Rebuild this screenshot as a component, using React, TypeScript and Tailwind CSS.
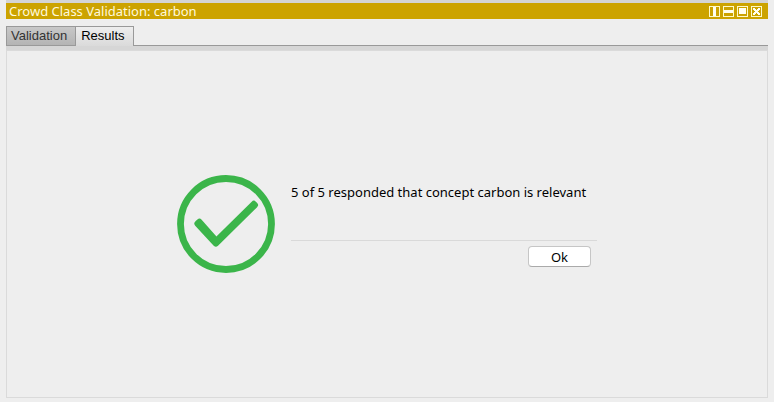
import { useState } from "react";
import type { ReactNode } from "react";

function FrameButton({ label, children }: { label: string; children: ReactNode }) {
  return (
    <button type="button" aria-label={label} className="block">
      <svg width="11" height="11" viewBox="0 0 11 11" shapeRendering="crispEdges" fill="#fffef0">
        <rect x="0.5" y="0.5" width="10" height="10" fill="none" stroke="#fffac8" />
        {children}
      </svg>
    </button>
  );
}

function TitleBar() {
  return (
    <header className="flex h-[19px] items-center justify-between border-t-[3px] border-[#d4d4d4] bg-[#cca300] pr-[6px] pl-[3px]">
      <h1 className="text-[13px] leading-4 text-[#fff9dc]">Crowd Class Validation: carbon</h1>
      <div className="flex gap-[3px]">
        <FrameButton label="Split vertically">
          <rect x="4" y="1" width="3" height="9" />
        </FrameButton>
        <FrameButton label="Split horizontally">
          <rect x="1" y="4" width="9" height="3" />
        </FrameButton>
        <FrameButton label="Float">
          <rect x="2" y="2" width="7" height="6" />
        </FrameButton>
        <FrameButton label="Close">
          <path d="M2 2h2v1h1v1h1V3h1V2h2v2H8v1H7v1h1v1h1v2H7V8H6V7H5v1H4v1H2V7h1V6h1V5H3V4H2z" />
        </FrameButton>
      </div>
    </header>
  );
}

const tabs = ["Validation", "Results"];

export default function App() {
  const [active, setActive] = useState("Results");
  return (
    <div className="flex min-h-screen flex-col bg-[#eeeeee] px-[6px] pb-1 font-['Noto_Sans','Open_Sans',sans-serif] text-black">
      <TitleBar />
      <div
        role="tablist"
        className="mt-[7px] flex h-5 border-b border-[#999999] font-['Liberation_Sans',Arial,sans-serif] text-[13px] leading-[18px]"
      >
        {tabs.map((tab) => (
          <button
            key={tab}
            type="button"
            role="tab"
            aria-selected={tab === active}
            onClick={() => setActive(tab)}
            className={
              tab === active
                ? "-mb-px border-t border-r border-[#999999] bg-linear-to-b from-[#eeeeee] to-[#dadada] pr-2 pb-px pl-[5px]"
                : "border-t border-r border-l border-[#999999] bg-linear-to-b from-[#c8c8c8] to-[#b4b4b4] pr-2 pl-1 text-[#333333]"
            }
          >
            {tab}
          </button>
        ))}
      </div>
      <div className="h-1 bg-[#d6d6d6]" />
      <main role="tabpanel" className="flex flex-1 items-center justify-center border border-[#dadada]">
        <div className="flex items-start gap-4">
          <svg width="98" height="98" viewBox="0 0 98 98" fill="none" stroke="#3bb54a" aria-hidden="true">
            <circle cx="49" cy="49" r="45.5" strokeWidth="6.8" />
            <path
              d="M20.4 48.6L22.4 46.8L39.2 65.8L76.8 28.8L78 30L38.9 68.6z"
              fill="#3bb54a"
              strokeWidth="6"
              strokeLinejoin="round"
            />
          </svg>
          <div className="min-w-[306px] pt-[7px]">
            <p className="text-[13px] leading-5">5 of 5 responded that concept carbon is relevant</p>
            <div className="mt-[38px] flex justify-end border-t border-[#d9d9d9] px-[6px] pt-[5px]">
              <button
                type="button"
                className="h-[21px] w-[63px] rounded-[4px] border border-[#c6c6c6] border-b-[#aaaaaa] bg-white text-[13px] leading-[18px]"
              >
                Ok
              </button>
            </div>
          </div>
        </div>
      </main>
    </div>
  );
}
